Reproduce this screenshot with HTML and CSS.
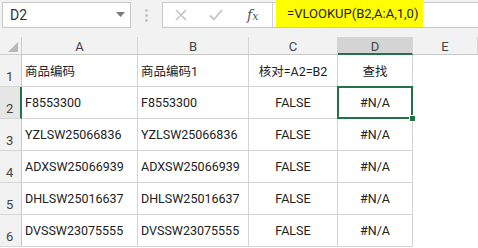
FILE: index.html
```html
<!DOCTYPE html>
<html>
<head>
<meta charset="utf-8">
<link rel="stylesheet" href="styles.css">
</head>
<body>
<div class="app">
  <div class="toolbar">
    <div class="namebox">
      <span class="name">D2</span>
      <svg class="caret" width="9" height="5" viewBox="0 0 9 5"><path d="M0 0H9L4.5 5Z" fill="#7a7a7a"/></svg>
    </div>
    <div class="sep">
      <svg width="3" height="13" viewBox="0 0 3 13"><circle cx="1.5" cy="1.5" r="1.2" fill="#b5b5b5"/><circle cx="1.5" cy="6.5" r="1.2" fill="#b5b5b5"/><circle cx="1.5" cy="11.5" r="1.2" fill="#b5b5b5"/></svg>
    </div>
    <div class="fbar">
      <div class="btns">
        <svg class="ico" width="12" height="12" viewBox="0 0 12 12"><path d="M1 1L11 11M11 1L1 11" stroke="#c4c4c4" stroke-width="1.6" fill="none"/></svg>
        <svg class="ico" width="14" height="12" viewBox="0 0 14 12"><path d="M1 6.5L5 10.5L13 1" stroke="#c4c4c4" stroke-width="1.8" fill="none"/></svg>
        <span class="fx"><i>f</i><span class="x">x</span></span>
      </div>
      <div class="formula"><span class="hl">=VLOOKUP(B2,A:A,1,0)</span></div>
    </div>
  </div>
  <div class="sheet">
    <div class="corner"><svg width="10" height="10" viewBox="0 0 10 10"><path d="M10 0V10H0Z" fill="#b9b9b9"/></svg></div>
    <div class="ch">A</div>
    <div class="ch">B</div>
    <div class="ch">C</div>
    <div class="ch sel">D</div>
    <div class="ch">E</div>

    <div class="rh">1</div>
    <div class="c">商品编码</div>
    <div class="c">商品编码1</div>
    <div class="c mid">核对=A2=B2</div>
    <div class="c mid">查找</div>
    <div class="e"></div>

    <div class="rh sel">2</div>
    <div class="c">F8553300</div>
    <div class="c">F8553300</div>
    <div class="c mid">FALSE</div>
    <div class="c mid active">#N/A<span class="handle"></span></div>
    <div class="e"></div>

    <div class="rh">3</div>
    <div class="c">YZLSW25066836</div>
    <div class="c">YZLSW25066836</div>
    <div class="c mid">FALSE</div>
    <div class="c mid">#N/A</div>
    <div class="e"></div>

    <div class="rh">4</div>
    <div class="c">ADXSW25066939</div>
    <div class="c">ADXSW25066939</div>
    <div class="c mid">FALSE</div>
    <div class="c mid">#N/A</div>
    <div class="e"></div>

    <div class="rh">5</div>
    <div class="c">DHLSW25016637</div>
    <div class="c">DHLSW25016637</div>
    <div class="c mid">FALSE</div>
    <div class="c mid">#N/A</div>
    <div class="e"></div>

    <div class="rh">6</div>
    <div class="c">DVSSW23075555</div>
    <div class="c">DVSSW23075555</div>
    <div class="c mid">FALSE</div>
    <div class="c mid">#N/A</div>
    <div class="e"></div>
  </div>
</div>
</body>
</html>
```

FILE: styles.css
```css
* { box-sizing: border-box; }
html, body { margin: 0; padding: 0; }
body {
  width: 478px;
  height: 248px;
  overflow: hidden;
  background: #ffffff;
  font-family: Roboto, "Noto Sans CJK SC", sans-serif;
  color: #000;
}
.app { width: 478px; height: 248px; display: flex; flex-direction: column; }
.toolbar {
  height: 37px;
  flex: none;
  background: #f2f2f2;
  display: flex;
  align-items: flex-start;
  padding-top: 2px;
  padding-left: 2px;
}
.namebox {
  width: 129px;
  height: 26px;
  background: #fff;
  border: 1px solid #c6c6c6;
  display: flex;
  align-items: center;
  justify-content: space-between;
  padding: 0 5px 0 7px;
}
.name { font-size: 14px; color: #333; }
.caret { margin-top: -2px; }
.sep {
  width: 31px;
  height: 26px;
  display: flex;
  align-items: center;
  justify-content: center;
}
.fbar {
  flex: 1;
  height: 26px;
  display: flex;
  background: #fff;
  border: 1px solid #c6c6c6;
  border-right: none;
}
.btns {
  width: 110px;
  display: flex;
  align-items: center;
  padding-left: 12px;
  border-right: 1px solid #d0d0d0;
}
.btns .ico:nth-child(1) { margin-right: 22px; }
.btns .ico:nth-child(2) { margin-right: 24px; }
.fx {
  font-family: "DejaVu Serif", "Liberation Serif", serif;
  color: #555;
  font-size: 14px;
}
.fx i { font-style: italic; }
.fx .x { font-style: italic; font-size: 11px; }
.formula { flex: 1; padding-left: 3px; }
.hl {
  display: inline-block;
  margin-top: -3px;
  height: 27px;
  line-height: 27px;
  background: #ffff00;
  padding: 0 5px 0 11px;
  font-size: 13px;
  color: #222;
}
.sheet {
  flex: 1;
  display: grid;
  grid-template-columns: 22px 116px 111px 89px 75px 1fr;
  grid-template-rows: 18px repeat(6, 32px);
  background: #fff;
}
.corner {
  background: #f2f2f2;
  border-right: 1px solid #cfcfcf;
  border-bottom: 1px solid #cfcfcf;
  display: flex;
  align-items: flex-end;
  justify-content: flex-end;
  padding: 0 3px 2px 0;
}
.ch {
  background: #f2f2f2;
  border-right: 1px solid #d6d6d6;
  border-bottom: 1px solid #c8c8c8;
  font-size: 13px;
  color: #444;
  display: flex;
  align-items: center;
  justify-content: center;
  line-height: 1;
  padding-top: 2px;
}
.ch.sel {
  background: #d4d4d4;
  border-bottom: 2px solid #217346;
}
.rh {
  background: #f2f2f2;
  border-right: 1px solid #c8c8c8;
  border-bottom: 1px solid #d6d6d6;
  font-size: 13px;
  color: #444;
  display: flex;
  align-items: flex-end;
  padding: 0 0 2px 6px;
}
.rh.sel {
  background: #e6e6e6;
  border-right: 2px solid #217346;
}
.c {
  border-right: 1px solid #d4d4d4;
  border-bottom: 1px solid #d4d4d4;
  font-size: 12.5px;
  display: flex;
  align-items: center;
  padding-left: 3px;
  white-space: nowrap;
  overflow: hidden;
  color: #222;
}
.c.mid { justify-content: center; padding-left: 0; }
.e { background: #fff; }
.active { position: relative; overflow: visible; }
.active::after {
  content: "";
  position: absolute;
  left: -1px;
  top: -1px;
  right: -1px;
  bottom: -1px;
  border: 2px solid #217346;
}
.handle {
  position: absolute;
  right: -4px;
  bottom: -4px;
  width: 7px;
  height: 7px;
  background: #217346;
  border: 1px solid #fff;
  z-index: 2;
}
```
